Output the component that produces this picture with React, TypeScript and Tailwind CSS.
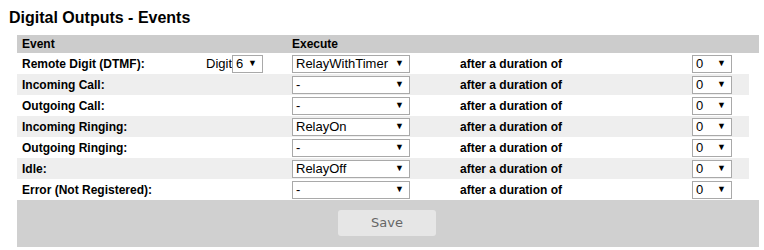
import React from "react";

function Sel({ value, w }: { value: string; w: string }) {
  return (
    <div
      className={`${w} h-[18px] border border-[#a9a9a9] bg-white flex items-center justify-between pl-[3px] pr-[5px] text-[13px] leading-none text-black font-normal`}
    >
      <span>{value}</span>
      <span className="text-[9px]">▼</span>
    </div>
  );
}

const rows = [
  { label: "Remote Digit (DTMF):", digit: true, exec: "RelayWithTimer" },
  { label: "Incoming Call:", exec: "-" },
  { label: "Outgoing Call:", exec: "-" },
  { label: "Incoming Ringing:", exec: "RelayOn" },
  { label: "Outgoing Ringing:", exec: "-" },
  { label: "Idle:", exec: "RelayOff" },
  { label: "Error (Not Registered):", exec: "-" },
];

export default function App() {
  return (
    <div className="w-[764px] h-[250px] bg-white font-['Liberation_Sans',Arial,sans-serif] text-black">
      <div className="pl-[9px] pt-[9px] h-[35px] text-[16px] font-bold leading-[18px]">
        Digital Outputs - Events
      </div>
      <div className="ml-[17px] w-[742px]">
        <div className="h-[18px] bg-[#cccccc] grid grid-cols-[183px_88px_167px_233px_71px] items-center text-[12px] font-bold">
          <div className="pl-[5px]">Event</div>
          <div></div>
          <div className="pl-[4px]">Execute</div>
          <div></div>
          <div></div>
        </div>
        {rows.map((r, i) => (
          <div
            key={i}
            className={`w-[732px] h-[21px] grid grid-cols-[183px_88px_167px_233px_61px] items-center text-[12px] font-bold ${
              i % 2 === 1 ? "bg-[#eeeeee]" : "bg-white"
            }`}
          >
            <div className="pl-[5px]">{r.label}</div>
            <div className="flex items-center pl-[6px]">
              {r.digit && (
                <>
                  <span className="text-[13px] font-normal">Digit</span>
                  <Sel value="6" w="w-[31px]" />
                </>
              )}
            </div>
            <div className="pl-[4px]">
              <Sel value={r.exec} w="w-[118px]" />
            </div>
            <div className="pl-[5px]">after a duration of</div>
            <div className="pl-[4px]">
              <Sel value="0" w="w-[40px]" />
            </div>
          </div>
        ))}
        <div className="h-[47px] bg-[#d0d0d0] flex justify-center pt-[10px]">
          <div className="w-[98px] h-[26px] rounded-[3px] bg-[#e6e6e6] flex items-center justify-center text-[13px] text-[#666666] font-['DejaVu_Sans',Verdana,sans-serif] ml-[-2px]">
            Save
          </div>
        </div>
      </div>
    </div>
  );
}
